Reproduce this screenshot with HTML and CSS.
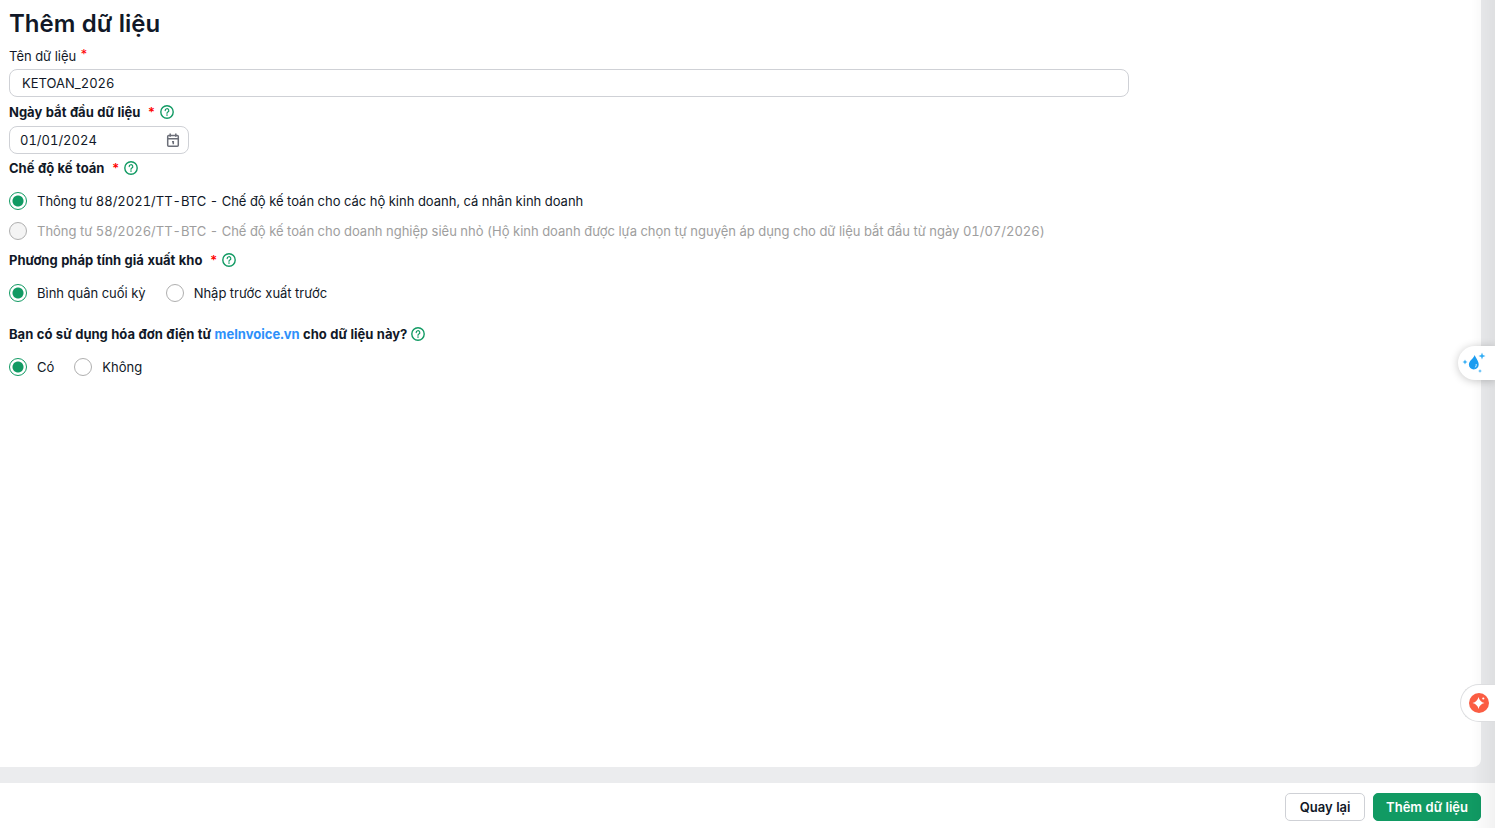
FILE: index.html
```html
<!DOCTYPE html>
<html lang="vi">
<head>
  <meta charset="utf-8">
  <meta name="viewport" content="width=device-width,initial-scale=1.0">
  <title>Thêm dữ liệu</title>
  <link rel="stylesheet" href="styles.css">
</head>
<body>
  <svg class="sprite" aria-hidden="true">
    <symbol id="help" viewBox="0 0 14 14">
      <circle cx="7" cy="7" r="6.2" fill="none" stroke="#119a63" stroke-width="1.4"/>
      <path d="M5.2 5.6a1.8 1.8 0 1 1 2.7 1.5c-.6.35-.9.6-.9 1.2" fill="none" stroke="#119a63" stroke-width="1.2" stroke-linecap="round"/>
      <circle cx="7" cy="10.1" r=".8" fill="#119a63"/>
    </symbol>
  </svg>

  <main class="page">
    <form class="panel" id="data-form">
      <h1 class="title">Thêm dữ liệu</h1>

      <div class="field">
        <label class="label" for="name">Tên dữ liệu <span class="star star-top">*</span></label>
        <input class="input" type="text" id="name" value="KETOAN_2026">
      </div>

      <div class="field date-field">
        <div class="label-row">
          <label class="label bold" for="start">Ngày bắt đầu dữ liệu</label>
          <span class="star">*</span>
          <svg class="help"><use href="#help"/></svg>
        </div>
        <div class="date">
          <input class="date-input" type="text" id="start" value="01/01/2024">
          <svg class="calendar" viewBox="0 0 14 14">
            <g fill="none" stroke="#6b6e78" stroke-width="1.5">
              <rect x="1.7" y="2.5" width="10.600" height="10.700" rx="1"/>
              <path d="M1.500 5.800h11M4.200.5v3.200M9.800.5v3.200M6 8.700h1.300v2.600"/>
            </g>
          </svg>
        </div>
      </div>

      <fieldset class="group">
        <legend class="label-row">
          <span class="label bold">Chế độ kế toán</span>
          <span class="star">*</span>
          <svg class="help"><use href="#help"/></svg>
        </legend>
        <div class="options column">
          <label class="option"><input class="radio" type="radio" name="regime" checked>Thông tư 88/2021/TT-BTC - Chế độ kế toán cho các hộ kinh doanh, cá nhân kinh doanh</label>
          <label class="option disabled"><input class="radio" type="radio" name="regime" disabled>Thông tư 58/2026/TT-BTC - Chế độ kế toán cho doanh nghiệp siêu nhỏ (Hộ kinh doanh được lựa chọn tự nguyện áp dụng cho dữ liệu bắt đầu từ ngày 01/07/2026)</label>
        </div>
      </fieldset>

      <fieldset class="group">
        <legend class="label-row">
          <span class="label bold">Phương pháp tính giá xuất kho</span>
          <span class="star">*</span>
          <svg class="help"><use href="#help"/></svg>
        </legend>
        <div class="options">
          <label class="option"><input class="radio" type="radio" name="method" checked>Bình quân cuối kỳ</label>
          <label class="option"><input class="radio" type="radio" name="method">Nhập trước xuất trước</label>
        </div>
      </fieldset>

      <fieldset class="group invoice">
        <legend class="label-row">
          <span class="label bold">Bạn có sử dụng hóa đơn điện tử <a class="link" href="#">meInvoice.vn</a> cho dữ liệu này?</span>
          <svg class="help"><use href="#help"/></svg>
        </legend>
        <div class="options">
          <label class="option"><input class="radio" type="radio" name="invoice" checked>Có</label>
          <label class="option"><input class="radio" type="radio" name="invoice">Không</label>
        </div>
      </fieldset>
    </form>
  </main>

  <footer class="footer">
    <button class="btn" type="button">Quay lại</button>
    <button class="btn btn-primary" type="submit" form="data-form">Thêm dữ liệu</button>
  </footer>

  <div class="edge-shadow"></div>

  <button class="tab tab-drop" type="button" aria-label="AVA">
    <svg width="24" height="24" viewBox="0 0 24 24">
      <path d="M12.800 4c.4 2.600 3.900 5.500 3.900 9.500a4.900 4.900 0 0 1-9.800 0c0-3.900 4.500-5.700 5.900-9.500z" fill="#1b9cf0"/>
      <path d="M14.200 13c.2 1.700-.3 2.900-1.400 3.700" fill="none" stroke="#fff" stroke-width=".8"/>
      <path d="M20 1.500l.9 2.600 2.600.9-2.600.9-.9 2.600-.9-2.600-2.600-.9 2.600-.9zM3 8.500l.8 1.700 1.700.8-1.700.8L3 13.500l-.8-1.700-1.700-.8 1.700-.8zM18 18l.5 1.500 1.500.5-1.500.5-.5 1.500-.5-1.500-1.500-.5 1.500-.5z" fill="#35aef5"/>
    </svg>
  </button>
  <button class="tab tab-star" type="button" aria-label="Trợ lý">
    <svg width="20" height="20" viewBox="0 0 20 20">
      <circle cx="10" cy="10" r="10" fill="#fb5d43"/>
      <path d="M9.500 4q1 4.700 6 6-5 1.300-6 6-1-4.700-6-6 5-1.300 6-6z" fill="#fff"/>
      <circle cx="14.300" cy="5.500" r="1.100" fill="#fff"/>
    </svg>
  </button>
</body>
</html>
```
FILE: styles.css
```css
* {
  box-sizing: border-box;
}
body {
  margin: 0;
  min-height: 100vh;
  display: flex;
  flex-direction: column;
  overflow-x: hidden;
  background: #ebecee;
  color: #111827;
  font-family: Inter, "Open Sans", sans-serif;
  font-size: 13px;
  line-height: 16px;
  text-rendering: optimizeSpeed;
  font-variant-numeric: tabular-nums;
}
.sprite {
  position: absolute;
  width: 0;
  height: 0;
}

/* form */
.page {
  flex: 1;
  display: flex;
  padding: 0 14px 16px 0;
}
.panel {
  flex: 1;
  padding: 8px 9px;
  background: #fff;
  border-radius: 0 0 8px 0;
}
.title {
  margin: 0 0 8px;
  font-size: 24px;
  line-height: 32px;
  font-weight: 600;
}
.field {
  display: flex;
  flex-direction: column;
  align-items: flex-start;
  gap: 5px;
  margin-bottom: 7px;
}
.date-field {
  gap: 6px;
  margin-bottom: 6px;
}
.label-row {
  display: flex;
  align-items: center;
  padding: 0;
}
.bold {
  font-weight: 700;
}
.star {
  margin-left: 7px;
  color: #f00;
  font-weight: 600;
}
.star-top {
  margin-left: 0;
  font-weight: 400;
  vertical-align: 2px;
  line-height: 1;
}
.help {
  width: 14px;
  height: 14px;
  margin-left: 4px;
}
.input,
.date {
  height: 28px;
  border: 1px solid #cfd1d6;
  border-radius: 8px;
  background: #fff;
}
.input,
.date-input {
  color: inherit;
  font: inherit;
  text-rendering: inherit;
}
.input {
  width: 100%;
  max-width: 1120px;
  padding: 0 12px;
}
.date {
  display: flex;
  align-items: center;
  width: 180px;
  padding: 0 8px 0 10px;
}
.date-input {
  flex: 1;
  min-width: 0;
  padding: 0;
  border: 0;
  outline: 0;
  background: none;
}
.calendar {
  width: 14px;
  height: 14px;
}

.group {
  min-width: 0;
  margin: 0;
  padding: 0 0 6px;
  border: 0;
}
.invoice {
  margin-top: 12px;
}
.options {
  display: flex;
  gap: 0 20px;
  padding-top: 10px;
}
.column {
  flex-direction: column;
}
.option {
  display: flex;
  align-items: center;
  gap: 10px;
  min-height: 30px;
}
.disabled {
  color: #9e9e9e;
}
.radio {
  appearance: none;
  flex: none;
  width: 18px;
  height: 18px;
  margin: 0;
  border: 1px solid #afafaf;
  border-radius: 50%;
  background: #fff;
}
.radio:checked {
  border-color: #119a63;
  background: radial-gradient(circle, #119a63 5px, #fff 6px);
}
.radio:disabled {
  background: #f4f4f4;
}
.link {
  color: #2e90fa;
  text-decoration: none;
}

/* bottom bar */
.footer {
  display: flex;
  justify-content: flex-end;
  gap: 8px;
  padding: 10px 14px 7px;
  background: #fff;
}
.btn {
  height: 28px;
  min-width: 80px;
  padding: 0 12px;
  border: 1px solid #cfd1d6;
  border-radius: 5px;
  background: #fff;
  color: #111827;
  font: inherit;
  font-weight: 600;
  text-rendering: inherit;
}
.btn-primary {
  border-color: #119a63;
  background: #119a63;
  color: #fff;
}

/* things pinned to the right edge */
.edge-shadow {
  position: fixed;
  top: 0;
  right: 0;
  bottom: 0;
  width: 24px;
  background: linear-gradient(to right, rgba(0, 0, 0, 0), rgba(0, 0, 0, 0.05));
  pointer-events: none;
}
.tab {
  position: fixed;
  right: 0;
  display: flex;
  align-items: center;
  padding: 0;
  border: 0;
  background: #fff;
}
.tab-drop {
  top: 346px;
  width: 37px;
  height: 34px;
  padding-left: 4px;
  border-radius: 17px 0 0 17px;
  box-shadow: 0 1px 8px rgba(0, 0, 0, 0.22);
}
.tab-star {
  bottom: 106px;
  width: 35px;
  height: 38px;
  padding-left: 8px;
  border: 1px solid #dddee0;
  border-right: 0;
  border-radius: 19px 0 0 19px;
}
```
